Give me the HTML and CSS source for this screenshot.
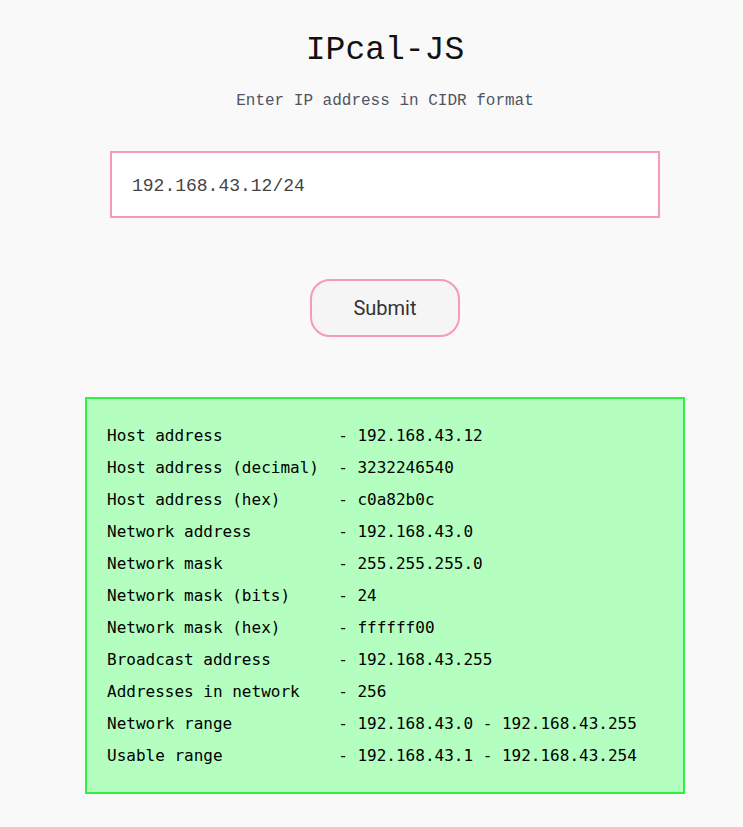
FILE: index.html
```html
<!DOCTYPE html>
<html lang="en">
<head>
<meta charset="utf-8">
<title>IPcal-JS</title>
<link rel="stylesheet" href="styles.css">
</head>
<body>
<main class="app">
  <h1 class="title">IPcal-JS</h1>
  <p class="subtitle">Enter IP address in CIDR format</p>
  <input class="ip-input" type="text" value="192.168.43.12/24">
  <button class="submit">Submit</button>
  <div class="result">
    <div class="row"><span class="label">Host address</span><span class="value">- 192.168.43.12</span></div>
    <div class="row"><span class="label">Host address (decimal)</span><span class="value">- 3232246540</span></div>
    <div class="row"><span class="label">Host address (hex)</span><span class="value">- c0a82b0c</span></div>
    <div class="row"><span class="label">Network address</span><span class="value">- 192.168.43.0</span></div>
    <div class="row"><span class="label">Network mask</span><span class="value">- 255.255.255.0</span></div>
    <div class="row"><span class="label">Network mask (bits)</span><span class="value">- 24</span></div>
    <div class="row"><span class="label">Network mask (hex)</span><span class="value">- ffffff00</span></div>
    <div class="row"><span class="label">Broadcast address</span><span class="value">- 192.168.43.255</span></div>
    <div class="row"><span class="label">Addresses in network</span><span class="value">- 256</span></div>
    <div class="row"><span class="label">Network range</span><span class="value">- 192.168.43.0 - 192.168.43.255</span></div>
    <div class="row"><span class="label">Usable range</span><span class="value">- 192.168.43.1 - 192.168.43.254</span></div>
  </div>
</main>
</body>
</html>
```
FILE: styles.css
```css
html, body {
  margin: 0;
  padding: 0;
  background: #f9f9f9;
}

.app {
  display: flex;
  flex-direction: column;
  align-items: center;
  padding: 31px 0 0 27px;
}

.title {
  margin: 0;
  font-family: "Liberation Mono", "DejaVu Sans Mono", monospace;
  font-weight: normal;
  font-size: 33px;
  line-height: 40px;
  color: #111;
}

.subtitle {
  margin: 20px 0 0;
  font-family: "Liberation Mono", "DejaVu Sans Mono", monospace;
  font-size: 16px;
  line-height: 20px;
  color: #4f5560;
}

.ip-input {
  box-sizing: border-box;
  margin-top: 40px;
  width: 550px;
  height: 67px;
  padding: 2px 20px 0;
  border: 2px solid #f799ba;
  background: #fff;
  font-family: "Liberation Mono", "DejaVu Sans Mono", monospace;
  font-size: 18px;
  color: #444;
  outline: none;
}

.submit {
  box-sizing: border-box;
  margin-top: 61px;
  width: 150px;
  height: 58px;
  border: 2px solid #f799ba;
  border-radius: 20px;
  background: #f5f5f5;
  font-family: Roboto, "Noto Sans", sans-serif;
  font-size: 20px;
  color: #333;
}

.result {
  box-sizing: border-box;
  margin-top: 60px;
  width: 600px;
  padding: 21px 20px 20px;
  border: 2px solid #2ff046;
  background: #b4ffbf;
  font-family: "DejaVu Sans Mono", monospace;
  font-size: 16px;
  line-height: 32px;
  color: #000;
}

.row {
  display: flex;
  white-space: pre;
}

.label {
  width: 24ch;
  flex: none;
}
```
